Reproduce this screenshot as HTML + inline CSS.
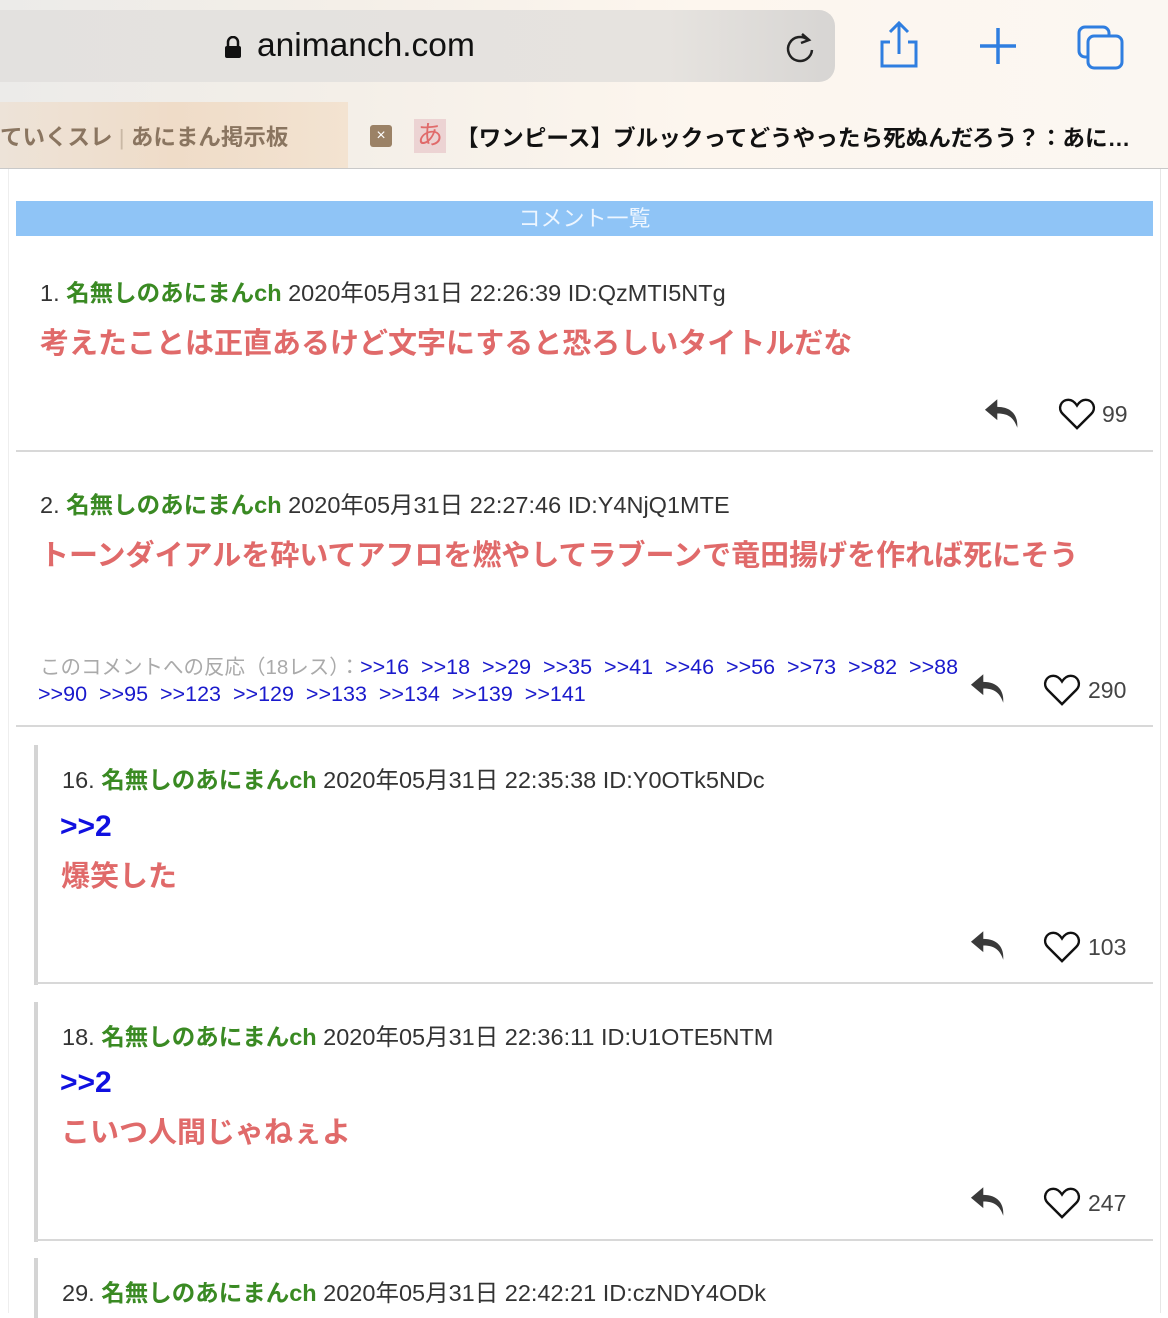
<!DOCTYPE html>
<html><head><meta charset="utf-8"><style>
*{margin:0;padding:0;box-sizing:border-box}
body{width:1168px;height:1313px;overflow:hidden;background:#fff;font-family:"Liberation Sans","Noto Sans CJK JP",sans-serif;position:relative}
.a{position:absolute;white-space:nowrap}
.hd{font-size:23.5px;color:#333}
.nm{color:#3a8a23;font-weight:bold}
.bd{font-size:29px;color:#e06a6a;font-weight:bold}
.rf{font-size:30px;color:#1010e0;font-weight:bold}
.cnt{font-size:23px;color:#444}
.ln{position:absolute;height:2px;background:#d8d8d8}
.vb{position:absolute;width:4px;background:#d4d4d4}
</style></head><body>
<div class="a" style="left:0;top:0;width:1168px;height:168px;background:linear-gradient(90deg,#ecebe9 0%,#f4efe8 30%,#fdf6ee 60%,#fbf7f2 100%)"></div>
<div class="a" style="left:0;top:10px;width:835px;height:72px;border-radius:0 16px 16px 0;background:linear-gradient(90deg,#e3e1df,#e6e3df 80%,#d7d5d3)"></div>
<div class="a" style="left:224px;top:36px;width:18px;height:22px"><svg width="18" height="22"><path d="M4 10V6a5 5 0 0110 0v4" stroke="#111" stroke-width="2.5" fill="none"/><rect x="1" y="10" width="16" height="12" rx="2" fill="#111"/></svg></div>
<div class="a" style="left:257px;top:27px;font-size:33.5px;color:#111">animanch.com</div>
<svg class="a" style="left:782px;top:28px" width="36" height="38"><path d="M26 12A12 12 0 1 0 30 22" stroke="#222" stroke-width="2.5" fill="none"/><path d="M20 6l7 6-8 3" stroke="#222" stroke-width="2.5" fill="none"/></svg>
<svg class="a" style="left:876px;top:20px" width="46" height="50"><path d="M14 22H6v24h34V22h-8" stroke="#2f7ee0" stroke-width="3" fill="none"/><path d="M23 34V4M14 12l9-9 9 9" stroke="#2f7ee0" stroke-width="3" fill="none"/></svg>
<svg class="a" style="left:978px;top:26px" width="40" height="40"><path d="M20 2v36M2 20h36" stroke="#2f7ee0" stroke-width="3.5"/></svg>
<svg class="a" style="left:1076px;top:24px" width="50" height="46"><rect x="3" y="3" width="30" height="30" rx="6" stroke="#2f7ee0" stroke-width="3" fill="none"/><rect x="12" y="12" width="34" height="32" rx="6" stroke="#2f7ee0" stroke-width="3" fill="#fdf8f2"/></svg>
<div class="a" style="left:0;top:102px;width:348px;height:66px;background:linear-gradient(90deg,#ede3d8,#efdcc8 50%,#f3e3d1)"></div>
<div class="a" style="left:0;top:120px;font-size:22.5px;color:#8a7560;font-weight:bold">ていくスレ<span style="color:#c9b8a5;font-weight:normal"> | </span>あにまん掲示板</div>
<div class="a" style="left:370px;top:125px;width:22px;height:22px;background:#9b8266;border-radius:3px;color:#fff;font-size:16px;text-align:center;line-height:22px">×</div>
<div class="a" style="left:414px;top:119px;width:32px;height:34px;background:#ecd3d3;color:#e06a6a;font-size:26px;text-align:center;line-height:32px">あ</div>
<div class="a" style="left:456px;top:120px;font-size:22.6px;color:#111;font-weight:bold">【ワンピース】ブルックってどうやったら死ぬんだろう？：あに…</div>
<div class="a" style="left:0;top:168px;width:1168px;height:1px;background:#c9c9c9"></div>
<div class="a" style="left:8px;top:169px;width:1px;height:1144px;background:#eee"></div>
<div class="a" style="left:1160px;top:169px;width:1px;height:1144px;background:#e6e6e6"></div>
<div class="a" style="left:16px;top:201px;width:1137px;height:35px;background:#8fc4f6;color:#eef6ff;font-size:22px;text-align:center;line-height:36px">コメント一覧</div>

<div class="a hd" style="left:40px;top:274px">1. <span class="nm">名無しのあにまんch</span> 2020年05月31日 22:26:39 ID:QzMTI5NTg</div>
<div class="a bd" style="left:40px;top:320px">考えたことは正直あるけど文字にすると恐ろしいタイトルだな</div>
<div class="ln" style="left:16px;top:450px;width:1137px"></div>

<div class="a hd" style="left:40px;top:486px">2. <span class="nm">名無しのあにまんch</span> 2020年05月31日 22:27:46 ID:Y4NjQ1MTE</div>
<div class="a bd" style="left:40px;top:532px">トーンダイアルを砕いてアフロを燃やしてラブーンで竜田揚げを作れば死にそう</div>
<div class="a" style="left:40px;top:650px;font-size:20.5px;color:#aaa">このコメントへの反応（18レス）：<span style="color:#1a1acc;font-size:21.5px;word-spacing:6px">&gt;&gt;16 &gt;&gt;18 &gt;&gt;29 &gt;&gt;35 &gt;&gt;41 &gt;&gt;46 &gt;&gt;56 &gt;&gt;73 &gt;&gt;82 &gt;&gt;88</span></div>
<div class="a" style="left:38px;top:682px;font-size:21.5px;color:#1a1acc;word-spacing:6px">&gt;&gt;90 &gt;&gt;95 &gt;&gt;123 &gt;&gt;129 &gt;&gt;133 &gt;&gt;134 &gt;&gt;139 &gt;&gt;141</div>
<div class="ln" style="left:16px;top:725px;width:1137px"></div>

<div class="vb" style="left:34px;top:745px;height:240px"></div>
<div class="a hd" style="left:62px;top:761px">16. <span class="nm">名無しのあにまんch</span> 2020年05月31日 22:35:38 ID:Y0OTk5NDc</div>
<div class="a rf" style="left:60px;top:810px">&gt;&gt;2</div>
<div class="a bd" style="left:61px;top:853px">爆笑した</div>
<div class="ln" style="left:36px;top:982px;width:1117px"></div>

<div class="vb" style="left:34px;top:1002px;height:240px"></div>
<div class="a hd" style="left:62px;top:1018px">18. <span class="nm">名無しのあにまんch</span> 2020年05月31日 22:36:11 ID:U1OTE5NTM</div>
<div class="a rf" style="left:60px;top:1066px">&gt;&gt;2</div>
<div class="a bd" style="left:61px;top:1109px">こいつ人間じゃねぇよ</div>
<div class="ln" style="left:36px;top:1239px;width:1117px"></div>

<div class="vb" style="left:34px;top:1258px;height:60px"></div>
<div class="a hd" style="left:62px;top:1274px">29. <span class="nm">名無しのあにまんch</span> 2020年05月31日 22:42:21 ID:czNDY4ODk</div>

<svg width="0" height="0" style="position:absolute"><defs>
<symbol id="rp" viewBox="0 0 40 34"><path d="M14 2L1 13l13 11v-7c10 0 17 3 21 15 1-13-6-22-21-22z" fill="#3a3a3a"/></symbol>
<symbol id="ht" viewBox="0 0 40 36"><path d="M20 33L5 18C-1 12 3 3 11 3c4 0 7 3 9 6 2-3 5-6 9-6 8 0 12 9 6 15z" stroke="#111" stroke-width="2.6" fill="none"/></symbol>
</defs></svg>
<svg class="a" style="left:984px;top:397px" width="38" height="33"><use href="#rp"/></svg>
<svg class="a" style="left:1058px;top:397px" width="38" height="34"><use href="#ht"/></svg>
<div class="a cnt" style="left:1102px;top:401px">99</div>
<svg class="a" style="left:970px;top:672px" width="38" height="33"><use href="#rp"/></svg>
<svg class="a" style="left:1043px;top:673px" width="38" height="34"><use href="#ht"/></svg>
<div class="a cnt" style="left:1088px;top:677px">290</div>
<svg class="a" style="left:970px;top:929px" width="38" height="33"><use href="#rp"/></svg>
<svg class="a" style="left:1043px;top:930px" width="38" height="34"><use href="#ht"/></svg>
<div class="a cnt" style="left:1088px;top:934px">103</div>
<svg class="a" style="left:970px;top:1185px" width="38" height="33"><use href="#rp"/></svg>
<svg class="a" style="left:1043px;top:1186px" width="38" height="34"><use href="#ht"/></svg>
<div class="a cnt" style="left:1088px;top:1190px">247</div>
</body></html>
